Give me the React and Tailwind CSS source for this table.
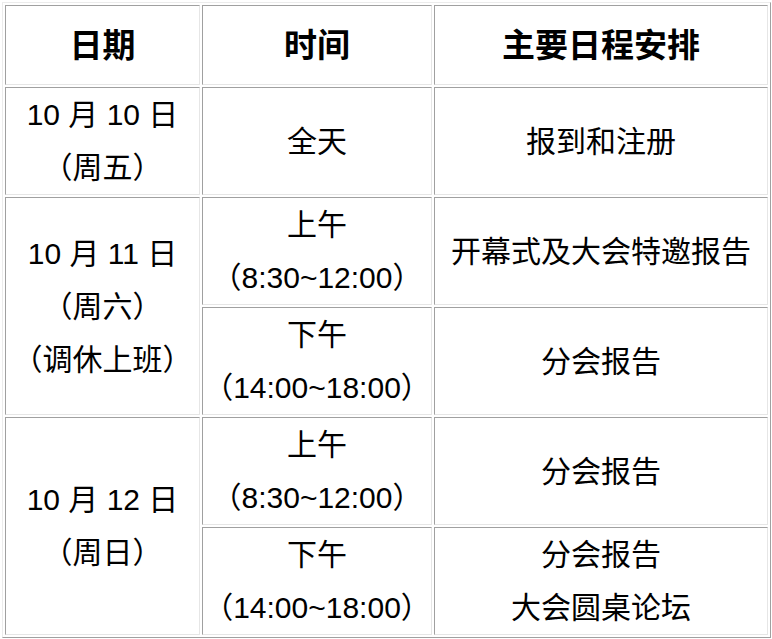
import React from "react";

const cell =
  "p-0 text-center align-middle border border-t-[#a0a0a0] border-l-[#a0a0a0] border-b-[#e6e6e6] border-r-[#e6e6e6]";

export default function App() {
  return (
    <div
      className="bg-white w-[772px] h-[639px] pl-[2px] pt-[2px] text-black"
      style={{ fontFamily: '"Liberation Sans", "Noto Sans CJK SC", sans-serif' }}
    >
      <table className="table-fixed border-separate border-spacing-[2px] border border-t-[#ececec] border-l-[#ececec] border-b-[#a0a0a0] border-r-[#a0a0a0] text-[30px] leading-[53px]">
        <colgroup>
          <col className="w-[195px]" />
          <col className="w-[230px]" />
          <col className="w-[334px]" />
        </colgroup>
        <thead>
          <tr className="h-[80px]">
            <th className={`${cell} w-[195px] text-[33px] font-bold`}>日期</th>
            <th className={`${cell} w-[230px] text-[33px] font-bold`}>时间</th>
            <th className={`${cell} w-[334px] text-[33px] font-bold`}>主要日程安排</th>
          </tr>
        </thead>
        <tbody>
          <tr className="h-[107px]">
            <td className={cell}>
              <div>10 月 10 日</div>
              <div>（周五）</div>
            </td>
            <td className={cell}>全天</td>
            <td className={cell}>报到和注册</td>
          </tr>
          <tr className="h-[108px]">
            <td className={cell} rowSpan={2}>
              <div>10 月 11 日</div>
              <div>（周六）</div>
              <div>（调休上班）</div>
            </td>
            <td className={cell}>
              <div>上午</div>
              <div>（8:30~12:00）</div>
            </td>
            <td className={cell}>开幕式及大会特邀报告</td>
          </tr>
          <tr className="h-[108px]">
            <td className={cell}>
              <div>下午</div>
              <div>（14:00~18:00）</div>
            </td>
            <td className={cell}>分会报告</td>
          </tr>
          <tr className="h-[107px]">
            <td className={cell} rowSpan={2}>
              <div>10 月 12 日</div>
              <div>（周日）</div>
            </td>
            <td className={cell}>
              <div>上午</div>
              <div>（8:30~12:00）</div>
            </td>
            <td className={cell}>分会报告</td>
          </tr>
          <tr className="h-[107px]">
            <td className={cell}>
              <div>下午</div>
              <div>（14:00~18:00）</div>
            </td>
            <td className={cell}>
              <div>分会报告</div>
              <div>大会圆桌论坛</div>
            </td>
          </tr>
        </tbody>
      </table>
    </div>
  );
}
